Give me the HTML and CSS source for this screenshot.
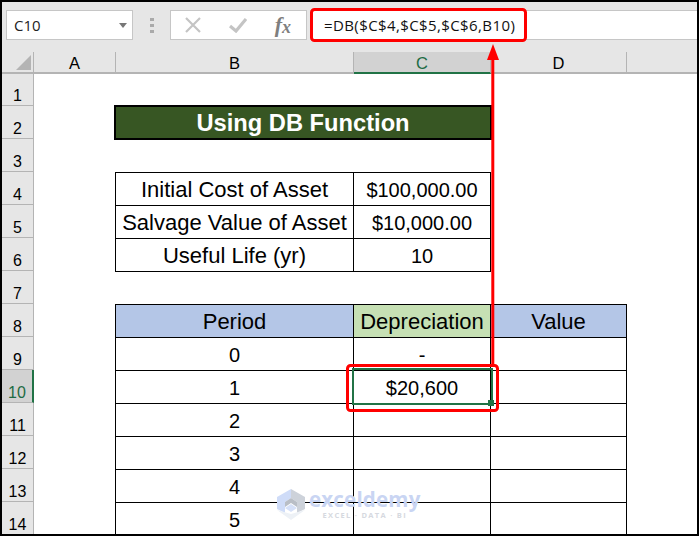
FILE: index.html
```html
<!DOCTYPE html>
<html lang="en">
<head>
<meta charset="utf-8">
<title>Using DB Function</title>
<link rel="stylesheet" href="styles.css">
</head>
<body>
<div class="frame">
  <div class="toolbar">
    <div class="namebox"><span>C10</span><i class="caret"></i></div>
    <div class="grip"><i></i><i></i><i></i></div>
    <div class="fnbox">
      <svg class="fnicon" width="16" height="16" viewBox="0 0 16 16"><path d="M1 1L15 15M15 1L1 15" stroke="#c4c4c4" stroke-width="2.2" fill="none"/></svg>
      <svg class="fnicon" width="18" height="16" viewBox="0 0 18 16"><path d="M1 9L7 14L17 2" stroke="#c4c4c4" stroke-width="3.2" fill="none"/></svg>
      <span class="fx">f<sub>x</sub></span>
    </div>
    <div class="formula">=DB($C$4,$C$5,$C$6,B10)</div>
  </div>
  <div class="sheet">
    <div class="corner"><svg width="15" height="15" viewBox="0 0 15 15"><path d="M15 0V15H0Z" fill="#b4b4b4"/></svg></div>
    <div class="ch">A</div>
    <div class="ch">B</div>
    <div class="ch sel">C</div>
    <div class="ch">D</div>
    <div class="ch end"></div>
    <div class="rows">
      <div class="rh first">1</div><div class="rh">2</div><div class="rh">3</div><div class="rh">4</div><div class="rh">5</div><div class="rh">6</div><div class="rh">7</div><div class="rh">8</div><div class="rh">9</div><div class="rh sel">10</div><div class="rh">11</div><div class="rh">12</div><div class="rh">13</div><div class="rh">14</div>
    </div>
    <div class="title">Using DB Function</div>
    <div class="info">
      <div class="c">Initial Cost of Asset</div><div class="c num">$100,000.00</div>
      <div class="c">Salvage Value of Asset</div><div class="c num">$10,000.00</div>
      <div class="c">Useful Life (yr)</div><div class="c num">10</div>
    </div>
    <div class="calc">
      <div class="c blue">Period</div><div class="c green">Depreciation</div><div class="c blue">Value</div>
      <div class="c num">0</div><div class="c num">-</div><div class="c"></div>
      <div class="c num">1</div><div class="c num">$20,600</div><div class="c"></div>
      <div class="c num">2</div><div class="c"></div><div class="c"></div>
      <div class="c num">3</div><div class="c"></div><div class="c"></div>
      <div class="c num">4</div><div class="c"></div><div class="c"></div>
      <div class="c num">5</div><div class="c"></div><div class="c"></div>
    </div>
  </div>
  <div class="selbox"><i class="handle"></i></div>
  <div class="mark">
    <svg width="28" height="31" viewBox="0 0 28 31"><path d="M14 0L0 8V20L8 24V13L14 9Z" fill="#cfdcf8"/><path d="M14 0L28 8V20L20 24V13L14 9Z" fill="#cdd2da"/><path d="M14 9L20 13V18L14 14L8 18V13Z" fill="#b9bec6"/><path d="M14 15L20 19L14 23L8 19Z" fill="#d5e0f8"/><path d="M0 21L14 31L28 21L14 25Z" fill="#edf1f6"/></svg>
    <div class="marktext"><span class="markname">exceldemy</span><span class="marksub">EXCEL · DATA · BI</span></div>
  </div>
  <svg class="annot" width="695" height="532" viewBox="0 0 695 532">
    <rect x="309.500" y="7.500" width="214" height="31" rx="3" fill="none" stroke="#f00" stroke-width="3"/>
    <rect x="345.500" y="363.500" width="150" height="45" rx="3" fill="none" stroke="#f00" stroke-width="3"/>
    <path d="M490.800 364V56" stroke="#f00" stroke-width="3" fill="none"/>
    <path d="M491 42L485 58H497Z" fill="#f00"/>
  </svg>
</div>
</body>
</html>
```
FILE: styles.css
```css
* { box-sizing: border-box; }
html, body { margin: 0; padding: 0; background: #fff; }
.frame {
  position: relative;
  width: 699px;
  height: 536px;
  border: 2px solid #000;
  overflow: hidden;
  font-family: "Liberation Sans", Arial, sans-serif;
  color: #000;
}
.toolbar {
  height: 50px;
  background: #e6e6e6;
  display: flex;
  align-items: flex-start;
  padding: 8px 0 0 4px;
}
.namebox {
  width: 127px;
  height: 30px;
  background: #fff;
  border: 1px solid #c6c6c6;
  display: flex;
  align-items: center;
  justify-content: space-between;
  padding: 0 5px 0 7px;
  font: 15px "Open Sans", sans-serif;
  color: #222;
}
.caret {
  width: 0;
  height: 0;
  border-left: 4px solid transparent;
  border-right: 4px solid transparent;
  border-top: 5px solid #777;
}
.grip {
  width: 37px;
  height: 30px;
  display: flex;
  flex-direction: column;
  align-items: center;
  justify-content: center;
  gap: 3px;
}
.grip i { width: 4px; height: 3px; background: #aaa; }
.fnbox {
  width: 137px;
  height: 30px;
  background: #fff;
  border: 1px solid #c6c6c6;
  display: flex;
  align-items: center;
  justify-content: space-between;
  padding: 0 15px 0 14px;
}
.fnicon { flex: none; }
.fx {
  font: italic bold 22px "Liberation Serif", serif;
  color: #7f7f7f;
  line-height: 20px;
}
.fx sub { font-size: 18px; vertical-align: -1px; line-height: 0; }
.formula {
  flex: 1;
  height: 30px;
  margin-left: 3px;
  background: #fff;
  border: 1px solid #c6c6c6;
  border-right: 0;
  padding-left: 13px;
  font: 15px/29px "Open Sans", sans-serif;
  letter-spacing: 0.4px;
  color: #111;
}
.sheet {
  display: grid;
  grid-template-columns: 32px 82px 238px 137px 136px 1fr;
  grid-template-rows: 22px 32px repeat(13, 33px);
}
.corner {
  background: #e6e6e6;
  border-right: 1px solid #b4b4b4;
  border-bottom: 2px solid #b4b4b4;
  display: flex;
  align-items: flex-end;
  justify-content: flex-end;
  padding: 0 2px 2px 0;
}
.ch {
  background: #e6e6e6;
  border-right: 1px solid #b4b4b4;
  border-bottom: 2px solid #b4b4b4;
  display: flex;
  align-items: center;
  justify-content: center;
  padding-top: 1px;
  font-size: 16.5px;
  line-height: 18px;
}
.ch.end { border-right: 0; }
.ch.sel {
  background: #d2d2d2;
  border-bottom-color: #217346;
  color: #1d6b44;
}
.rows {
  grid-column: 1;
  grid-row: 2 / 16;
  display: flex;
  flex-direction: column;
}
.rh {
  height: 33px;
  flex: none;
  background: #e6e6e6;
  border-right: 1px solid #b4b4b4;
  border-bottom: 1px solid #b4b4b4;
  display: flex;
  align-items: flex-end;
  justify-content: center;
  font-size: 16px;
  line-height: 18px;
}
.rh.first { height: 32px; }
.rh.sel {
  background: #d2d2d2;
  border-right: 2px solid #217346;
  color: #1d6b44;
}
.title {
  grid-column: 3 / 5;
  grid-row: 3;
  background: #375623;
  border: 2px solid #000;
  margin: -1px -1px -1px -2px;
  padding-top: 2px;
  color: #fff;
  font-weight: bold;
  font-size: 23.7px;
  display: flex;
  align-items: center;
  justify-content: center;
}
.info, .calc {
  display: grid;
  grid-auto-rows: 33px;
}
.info {
  grid-column: 3 / 5;
  grid-row: 5 / 8;
  grid-template-columns: 238px 137px;
}
.calc {
  grid-column: 3 / 6;
  grid-row: 9 / 16;
  grid-template-columns: 238px 137px 136px;
}
.c {
  border: 1px solid #000;
  margin: 0 0 -1px -1px;
  padding-top: 2px;
  display: flex;
  align-items: center;
  justify-content: center;
  font-size: 22px;
  white-space: nowrap;
}
.num { font-size: 20px; }
.blue { background: #b4c6e7; }
.green { background: #c6e0b4; }
.selbox {
  position: absolute;
  left: 350px;
  top: 366px;
  width: 141px;
  height: 37px;
  border: 2px solid #217346;
}
.handle {
  position: absolute;
  right: -3px;
  bottom: -3px;
  width: 6px;
  height: 6px;
  background: #217346;
}
.mark {
  position: absolute;
  left: 275px;
  top: 487px;
  display: flex;
  align-items: flex-start;
  gap: 4px;
}
.marktext { display: flex; flex-direction: column; align-items: center; }
.markname {
  font: bold 20.5px/21px "Open Sans", sans-serif;
  color: #c9d5f3;
  letter-spacing: 0.2px;
}
.marksub {
  font: bold 7.5px/10px "Open Sans", sans-serif;
  color: #d6d9e0;
  letter-spacing: 1.3px;
}
.annot {
  position: absolute;
  left: 0;
  top: 0;
  pointer-events: none;
}
```
